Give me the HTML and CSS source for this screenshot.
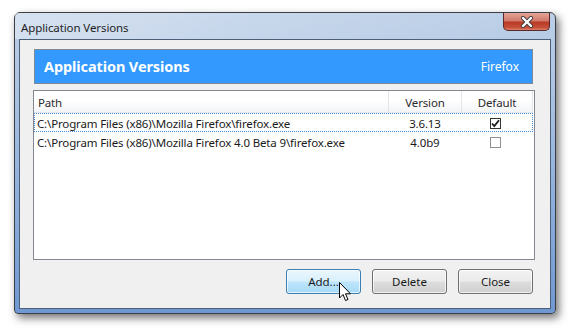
FILE: index.html
```html
<!DOCTYPE html>
<html>
<head>
<meta charset="utf-8">
<link rel="stylesheet" href="styles.css">
</head>
<body>
<div class="window">
  <div class="titlebar">
    <span class="title">Application Versions</span>
    <div class="close-btn">
      <svg width="16" height="12" viewBox="0 0 16 12"><path d="M4 2 L12 10 M12 2 L4 10" stroke="#3a3a3a" stroke-width="4" stroke-linecap="round" fill="none"/><path d="M4 2 L12 10 M12 2 L4 10" stroke="#ffffff" stroke-width="2.4" stroke-linecap="round" fill="none"/></svg>
    </div>
  </div>
  <div class="client">
    <div class="banner">
      <span class="banner-title">Application Versions</span>
      <span class="banner-app">Firefox</span>
    </div>
    <div class="list">
      <div class="list-head">
        <div class="col col-path">Path</div>
        <div class="col col-ver">Version</div>
        <div class="col col-def">Default</div>
      </div>
      <div class="row focus">
        <div class="col col-path">C:\Program Files (x86)\Mozilla Firefox\firefox.exe</div>
        <div class="col col-ver">3.6.13</div>
        <div class="col col-def"><span class="check checked"><svg width="9" height="9" viewBox="0 0 9 9"><path d="M1 4.5 L3.3 7 L8 1.2" stroke="#1a1a1a" stroke-width="1.8" fill="none"/></svg></span></div>
      </div>
      <div class="row">
        <div class="col col-path">C:\Program Files (x86)\Mozilla Firefox 4.0 Beta 9\firefox.exe</div>
        <div class="col col-ver">4.0b9</div>
        <div class="col col-def"><span class="check"></span></div>
      </div>
    </div>
    <div class="buttons">
      <div class="btn hot">Add...
        <svg class="cursor" width="13" height="20" viewBox="0 0 13 20"><path d="M0.5 0.5 L0.5 16 L4 12.5 L6.5 18.5 L9 17.5 L6.5 11.8 L11.5 11.8 Z" fill="#ffffff" stroke="#000000" stroke-width="1"/></svg>
      </div>
      <div class="btn">Delete</div>
      <div class="btn">Close</div>
    </div>
  </div>
</div>
</body>
</html>
```

FILE: styles.css
```css
html, body {
  margin: 0;
  padding: 0;
  background: #ffffff;
}
body {
  width: 571px;
  height: 330px;
  overflow: hidden;
  font-family: "Noto Sans", "Open Sans", sans-serif;
}
.window {
  margin: 12px 0 0 14px;
  width: 542px;
  height: 302px;
  box-sizing: border-box;
  border: 1px solid #3b3f45;
  border-radius: 6px 6px 4px 4px;
  background: linear-gradient(180deg, #bccfe7 0%, #a9c1e1 30%, #8fb0dc 60%, #6f98d2 100%);
  padding: 0 4px 4px 4px;
  box-shadow: 3px 4px 9px rgba(0,0,0,0.55);
  display: flex;
  flex-direction: column;
}
.titlebar {
  height: 26px;
  display: flex;
  align-items: flex-start;
  justify-content: space-between;
  background: linear-gradient(90deg, rgba(255,255,255,0.4) 0%, rgba(255,255,255,0.2) 40%, rgba(255,255,255,0) 100%);
  margin: 0 -4px;
  padding: 0 4px 0 6px;
}
.title {
  font-size: 11.5px;
  color: #1e1e1e;
  margin-top: 7px;
  letter-spacing: -0.1px;
}
.close-btn {
  width: 47px;
  height: 18px;
  margin-right: 1px;
  box-sizing: border-box;
  border: 1px solid #5b2a28;
  border-top: none;
  border-radius: 0 0 5px 5px;
  background: linear-gradient(180deg, #e3a598 0%, #d27a6b 45%, #b83a25 55%, #c6503a 85%, #d9806c 100%);
  display: flex;
  align-items: center;
  justify-content: center;
}
.client {
  flex: 1;
  background: #f0f0f0;
  border: 1px solid #4d5f76;
  display: flex;
  flex-direction: column;
  padding: 9px 17px 0 13px;
}
.banner {
  height: 35px;
  box-sizing: border-box;
  margin-left: 1px;
  background: #3399ff;
  border: 1px solid #808a96;
  display: flex;
  align-items: center;
  justify-content: space-between;
  padding: 0 13px 1px 9px;
  color: #ffffff;
}
.banner-title {
  font-weight: bold;
  font-size: 14.5px;
  letter-spacing: -0.1px;
}
.banner-app {
  font-size: 12px;
}
.list {
  margin-top: 6px;
  height: 170px;
  width: 502px;
  box-sizing: border-box;
  background: #ffffff;
  border: 1px solid #828790;
  font-size: 11.5px;
  color: #1a1a1a;
  letter-spacing: -0.15px;
}
.list-head {
  display: flex;
  height: 22px;
  width: 499px;
  box-sizing: border-box;
  border-bottom: 1px solid #e4e7eb;
  background: linear-gradient(180deg, #ffffff 0%, #ffffff 45%, #f3f4f6 100%);
  color: #2b2b2b;
}
.list-head .col {
  border-right: 1px solid #e3e5e8;
  display: flex;
  align-items: center;
  padding-top: 1px;
}
.col { box-sizing: border-box; }
.col-path { width: 355px; padding-left: 4px; }
.col-ver { width: 73px; justify-content: center; text-align: center; }
.col-def { width: 71px; justify-content: center; text-align: center; }
.row {
  display: flex;
  height: 19px;
  width: 499px;
  align-items: center;
  box-sizing: border-box;
  border: 1px solid transparent;
  padding-top: 1px;
}
.row .col-path { padding-left: 2px; }
.row .col-def { display: flex; justify-content: center; }
.row.focus {
  border: 1px dotted #4a90d9;
}
.check {
  width: 11px;
  height: 11px;
  box-sizing: border-box;
  border: 1px solid #8e8f8f;
  background: #ffffff;
  display: flex;
  align-items: center;
  justify-content: center;
  margin-left: -3px;
}
.check.checked { border-color: #333333; }
.buttons {
  display: flex;
  justify-content: flex-end;
  gap: 11px;
  margin-top: 9px;
  margin-right: 0;
}
.btn {
  position: relative;
  width: 75px;
  height: 25px;
  box-sizing: border-box;
  border: 1px solid #707070;
  border-radius: 3px;
  background: linear-gradient(180deg, #f2f2f2 0%, #ebebeb 48%, #dddddd 52%, #cfcfcf 100%);
  box-shadow: inset 0 0 0 1px rgba(255,255,255,0.7);
  font-size: 11.5px;
  color: #1a1a1a;
  display: flex;
  align-items: center;
  justify-content: center;
}
.btn.hot {
  border-color: #3c7fb1;
  background: linear-gradient(180deg, #eaf6fd 0%, #d9f0fc 48%, #bee6fd 52%, #a7d9f5 100%);
}
.cursor {
  position: absolute;
  left: 52px;
  top: 12px;
}
```
